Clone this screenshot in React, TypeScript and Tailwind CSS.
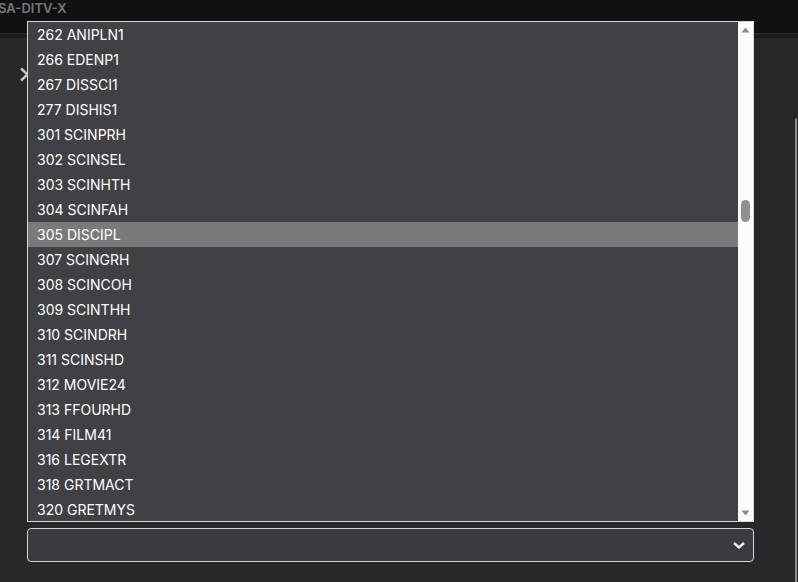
const CHANNELS = [
  "262 ANIPLN1",
  "266 EDENP1",
  "267 DISSCI1",
  "277 DISHIS1",
  "301 SCINPRH",
  "302 SCINSEL",
  "303 SCINHTH",
  "304 SCINFAH",
  "305 DISCIPL",
  "307 SCINGRH",
  "308 SCINCOH",
  "309 SCINTHH",
  "310 SCINDRH",
  "311 SCINSHD",
  "312 MOVIE24",
  "313 FFOURHD",
  "314 FILM41",
  "316 LEGEXTR",
  "318 GRTMACT",
  "320 GRETMYS",
];

const SELECTED = "305 DISCIPL";

export default function App() {
  return (
    <div
      className="relative w-[798px] h-[582px] overflow-hidden bg-[#28282a] flex flex-col"
      style={{ fontFamily: "Inter, 'Liberation Sans', sans-serif" }}
    >
      {/* top bar */}
      <div className="h-[33px] bg-[#111112] shrink-0">
        <div className="-ml-[2px] pt-[1px] text-[13px] leading-[15px] font-semibold text-[#77777a]">SA-DITV-X</div>
      </div>
      <div className="h-[1px] bg-[#2c2c2e] shrink-0" />
      <div className="h-[4px] bg-[#1c1c1e] shrink-0" />

      <div className="flex-1 flex">
        <div className="flex-1 flex flex-col">
          <div className="pl-[19px] pt-[29px]">
            <svg width="11" height="15" viewBox="0 0 11 15" fill="none">
              <path d="M2 1.5 L8.5 7.5 L2 13.5" stroke="#c4c4c6" strokeWidth="2.4" />
            </svg>
          </div>

          <div className="mt-auto mb-[20px] ml-[27px] w-[727px] h-[34px] rounded-[4px] border border-[#d4d4d6] bg-[#3b3a3f] flex items-center justify-end pr-[7px]">
            <svg width="14" height="9" viewBox="0 0 14 9" fill="none">
              <path d="M2 2 L7 6.5 L12 2" stroke="#f0f0f0" strokeWidth="2.4" />
            </svg>
          </div>
        </div>

        <div className="w-[3px] pt-[80px]">
          <div className="h-full border-l-2 border-[#8c8c8e] rounded-tl-[2px]" />
        </div>
      </div>

      {/* open dropdown list */}
      <div className="absolute left-[27px] top-[21px] w-[727px] h-[501px] border border-[#d9d9db] bg-[#414045] flex">
        <div className="flex-1 flex flex-col">
          {CHANNELS.map((c) => (
            <div
              key={c}
              className={
                "h-[25px] shrink-0 flex items-center pl-[9px] text-[14px] text-white " +
                (c === SELECTED ? "bg-[#7a7a7a]" : "")
              }
            >
              {c}
            </div>
          ))}
        </div>
        <div className="w-[15px] bg-[#fcfcfc] flex flex-col items-center">
          <svg width="9" height="6" viewBox="0 0 9 6" className="mt-[5px]">
            <path d="M0.5 5.5 L4.5 0.5 L8.5 5.5 Z" fill="#8a8a8a" />
          </svg>
          <div className="mt-[167px] w-[9px] h-[22px] rounded-full bg-[#909090]" />
          <svg width="9" height="6" viewBox="0 0 9 6" className="mt-auto mb-[5px]">
            <path d="M0.5 0.5 L8.5 0.5 L4.5 5.5 Z" fill="#8a8a8a" />
          </svg>
        </div>
      </div>
    </div>
  );
}
